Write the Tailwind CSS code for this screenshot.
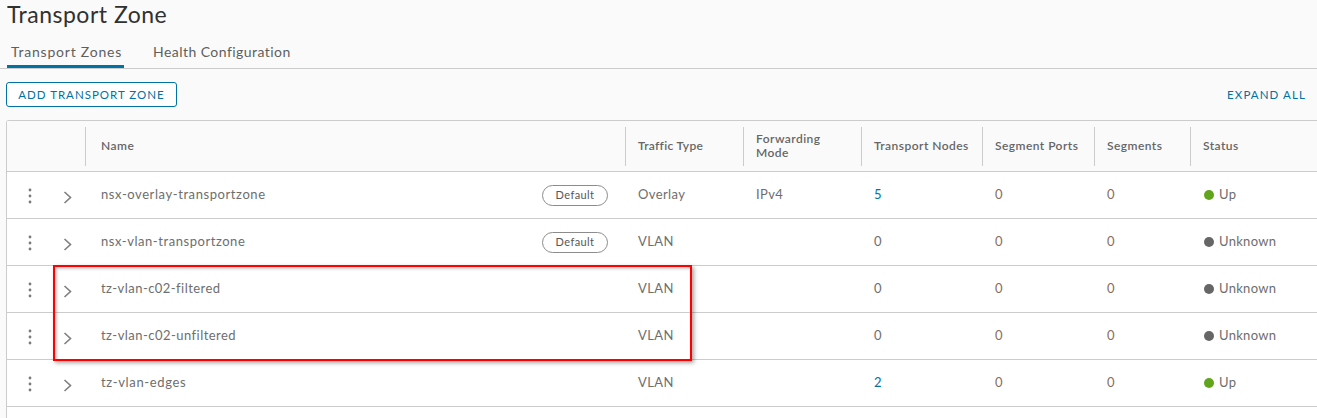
<!DOCTYPE html>
<html lang="en">
<head>
  <meta charset="UTF-8" />
  <title>Transport Zone</title>
  <script src="https://cdn.jsdelivr.net/npm/@tailwindcss/browser@4"></script>
</head>
<body class="bg-[#fafafa] text-[#565656] font-['Lato',sans-serif]">
  <div class="relative h-[418px] w-[1317px] overflow-hidden">
    <!-- Title -->
    <h1 class="pl-[7px] h-[38px] text-[23px] leading-[28px] tracking-[0.5px] text-[#313131]">Transport Zone</h1>

    <!-- Tabs -->
    <div class="flex h-[31px] border-b border-[#cccccc] pl-[7px] text-[14px] leading-[28px] text-[#5f5f5f]">
      <div class="h-[30px] w-[117px] border-b-[3px] border-[#0072a3] pl-[4px] tracking-[0.78px]">Transport Zones</div>
      <div class="ml-[29px] tracking-[0.45px]">Health Configuration</div>
    </div>

    <!-- Toolbar -->
    <div class="flex h-[51px] justify-between pl-[6px] pr-[11px] pt-[13px]">
      <button class="h-[25px] w-[171px] rounded-[3px] border border-[#0072a3] bg-white text-[11.5px] tracking-[1px] text-[#0072a3]">ADD TRANSPORT ZONE</button>
      <span class="text-[11.5px] leading-[25px] tracking-[1.1px] text-[#0072a3]">EXPAND ALL</span>
    </div>

    <!-- Table -->
    <div class="ml-[6px] w-[1400px] border-t border-l border-[#cccccc] bg-white rounded-tl-[3px]">
      <div class="grid h-[50px] grid-cols-[78px_540px_118px_118px_121px_112px_96px_130px] items-center bg-[#fafafa] text-[12px] font-semibold leading-[14px] tracking-[0.45px] text-[#666666]">
        <div></div>
        <div class="flex h-[39px] items-center border-l border-[#cccccc] pl-[15px]">Name</div>
        <div class="flex h-[39px] items-center border-l border-[#cccccc] pl-[12px] tracking-[0.3px]">Traffic Type</div>
        <div class="flex h-[39px] items-center border-l border-[#cccccc] pl-[12px]">Forwarding<br />Mode</div>
        <div class="flex h-[39px] items-center border-l border-[#cccccc] pl-[12px]">Transport Nodes</div>
        <div class="flex h-[39px] items-center border-l border-[#cccccc] pl-[12px]">Segment Ports</div>
        <div class="flex h-[39px] items-center border-l border-[#cccccc] pl-[12px]">Segments</div>
        <div class="flex h-[39px] items-center border-l border-[#cccccc] pl-[12px]">Status</div>
      </div>
      <div id="rows">
        <!-- row 1 -->
        <div class="grid h-[47px] grid-cols-[78px_540px_118px_118px_121px_112px_96px_130px] items-center border-t border-[#cccccc] text-[13px] tracking-[0.4px] text-[#6e6e6e]">
          <div class="relative h-full">
            <svg class="absolute left-[21px] top-[16px]" width="4" height="16" viewBox="0 0 4 16" fill="#7a7a7a"><circle cx="2" cy="2" r="1.4"/><circle cx="2" cy="8" r="1.4"/><circle cx="2" cy="14" r="1.4"/></svg>
            <svg class="absolute left-[56px] top-[19px]" width="9" height="13" viewBox="0 0 9 13" fill="none" stroke="#7f7f7f" stroke-width="1.6"><path d="M1.5 1l6 5.5-6 5.5"/></svg>
          </div>
          <div class="flex items-center justify-between pl-[16px] pr-[17px]">
            <span class="tracking-[0.58px]">nsx-overlay-transportzone</span>
            <span class="flex h-[21px] w-[66px] items-center justify-center rounded-full border border-[#8c8c8c] text-[11px] text-[#565656]">Default</span>
          </div>
          <div class="pl-[13px]">Overlay</div>
          <div class="pl-[13px]">IPv4</div>
          <div class="pl-[13px] text-[#0072a3]">5</div>
          <div class="pl-[13px] text-[#8a6d5c]">0</div>
          <div class="pl-[13px] text-[#8a6d5c]">0</div>
          <div class="flex items-center gap-[5px] pl-[14px] tracking-[0.3px]"><span class="h-[10px] w-[10px] rounded-full bg-[#60a51c]"></span>Up</div>
        </div>
        <!-- row 2 -->
        <div class="grid h-[47px] grid-cols-[78px_540px_118px_118px_121px_112px_96px_130px] items-center border-t border-[#cccccc] text-[13px] tracking-[0.4px] text-[#6e6e6e]">
          <div class="relative h-full">
            <svg class="absolute left-[21px] top-[16px]" width="4" height="16" viewBox="0 0 4 16" fill="#7a7a7a"><circle cx="2" cy="2" r="1.4"/><circle cx="2" cy="8" r="1.4"/><circle cx="2" cy="14" r="1.4"/></svg>
            <svg class="absolute left-[56px] top-[19px]" width="9" height="13" viewBox="0 0 9 13" fill="none" stroke="#7f7f7f" stroke-width="1.6"><path d="M1.5 1l6 5.5-6 5.5"/></svg>
          </div>
          <div class="flex items-center justify-between pl-[16px] pr-[17px]">
            <span class="tracking-[0.55px]">nsx-vlan-transportzone</span>
            <span class="flex h-[21px] w-[66px] items-center justify-center rounded-full border border-[#8c8c8c] text-[11px] text-[#565656]">Default</span>
          </div>
          <div class="pl-[13px]">VLAN</div>
          <div class="pl-[13px]"></div>
          <div class="pl-[13px]">0</div>
          <div class="pl-[13px] text-[#8a6d5c]">0</div>
          <div class="pl-[13px] text-[#8a6d5c]">0</div>
          <div class="flex items-center gap-[5px] pl-[14px] tracking-[0.3px]"><span class="h-[10px] w-[10px] rounded-full bg-[#666666]"></span>Unknown</div>
        </div>
        <!-- row 3 -->
        <div class="grid h-[47px] grid-cols-[78px_540px_118px_118px_121px_112px_96px_130px] items-center border-t border-[#cccccc] text-[13px] tracking-[0.4px] text-[#6e6e6e]">
          <div class="relative h-full">
            <svg class="absolute left-[21px] top-[16px]" width="4" height="16" viewBox="0 0 4 16" fill="#7a7a7a"><circle cx="2" cy="2" r="1.4"/><circle cx="2" cy="8" r="1.4"/><circle cx="2" cy="14" r="1.4"/></svg>
            <svg class="absolute left-[56px] top-[19px]" width="9" height="13" viewBox="0 0 9 13" fill="none" stroke="#7f7f7f" stroke-width="1.6"><path d="M1.5 1l6 5.5-6 5.5"/></svg>
          </div>
          <div class="pl-[16px] tracking-[0.45px]">tz-vlan-c02-filtered</div>
          <div class="pl-[13px]">VLAN</div>
          <div class="pl-[13px]"></div>
          <div class="pl-[13px]">0</div>
          <div class="pl-[13px] text-[#8a6d5c]">0</div>
          <div class="pl-[13px] text-[#8a6d5c]">0</div>
          <div class="flex items-center gap-[5px] pl-[14px] tracking-[0.3px]"><span class="h-[10px] w-[10px] rounded-full bg-[#666666]"></span>Unknown</div>
        </div>
        <!-- row 4 -->
        <div class="grid h-[47px] grid-cols-[78px_540px_118px_118px_121px_112px_96px_130px] items-center border-t border-[#cccccc] text-[13px] tracking-[0.4px] text-[#6e6e6e]">
          <div class="relative h-full">
            <svg class="absolute left-[21px] top-[16px]" width="4" height="16" viewBox="0 0 4 16" fill="#7a7a7a"><circle cx="2" cy="2" r="1.4"/><circle cx="2" cy="8" r="1.4"/><circle cx="2" cy="14" r="1.4"/></svg>
            <svg class="absolute left-[56px] top-[19px]" width="9" height="13" viewBox="0 0 9 13" fill="none" stroke="#7f7f7f" stroke-width="1.6"><path d="M1.5 1l6 5.5-6 5.5"/></svg>
          </div>
          <div class="pl-[16px] tracking-[0.46px]">tz-vlan-c02-unfiltered</div>
          <div class="pl-[13px]">VLAN</div>
          <div class="pl-[13px]"></div>
          <div class="pl-[13px]">0</div>
          <div class="pl-[13px] text-[#8a6d5c]">0</div>
          <div class="pl-[13px] text-[#8a6d5c]">0</div>
          <div class="flex items-center gap-[5px] pl-[14px] tracking-[0.3px]"><span class="h-[10px] w-[10px] rounded-full bg-[#666666]"></span>Unknown</div>
        </div>
        <!-- row 5 -->
        <div class="grid h-[47px] grid-cols-[78px_540px_118px_118px_121px_112px_96px_130px] items-center border-t border-[#cccccc] text-[13px] tracking-[0.4px] text-[#6e6e6e]">
          <div class="relative h-full">
            <svg class="absolute left-[21px] top-[16px]" width="4" height="16" viewBox="0 0 4 16" fill="#7a7a7a"><circle cx="2" cy="2" r="1.4"/><circle cx="2" cy="8" r="1.4"/><circle cx="2" cy="14" r="1.4"/></svg>
            <svg class="absolute left-[56px] top-[19px]" width="9" height="13" viewBox="0 0 9 13" fill="none" stroke="#7f7f7f" stroke-width="1.6"><path d="M1.5 1l6 5.5-6 5.5"/></svg>
          </div>
          <div class="pl-[16px] tracking-[0.65px]">tz-vlan-edges</div>
          <div class="pl-[13px]">VLAN</div>
          <div class="pl-[13px]"></div>
          <div class="pl-[13px] text-[#0072a3]">2</div>
          <div class="pl-[13px] text-[#8a6d5c]">0</div>
          <div class="pl-[13px] text-[#8a6d5c]">0</div>
          <div class="flex items-center gap-[5px] pl-[14px] tracking-[0.3px]"><span class="h-[10px] w-[10px] rounded-full bg-[#60a51c]"></span>Up</div>
        </div>
        <div class="h-[20px] border-t border-[#cccccc]"></div>
      </div>
    </div>

    <!-- Red annotation over the screenshot -->
    <div class="absolute left-[53px] top-[265px] h-[96px] w-[639px] border-2 border-[#ff0000] shadow-[2px_2px_4px_rgba(0,0,0,0.35),inset_2px_2px_3px_rgba(0,0,0,0.2)]"></div>
  </div>
</body>
</html>
